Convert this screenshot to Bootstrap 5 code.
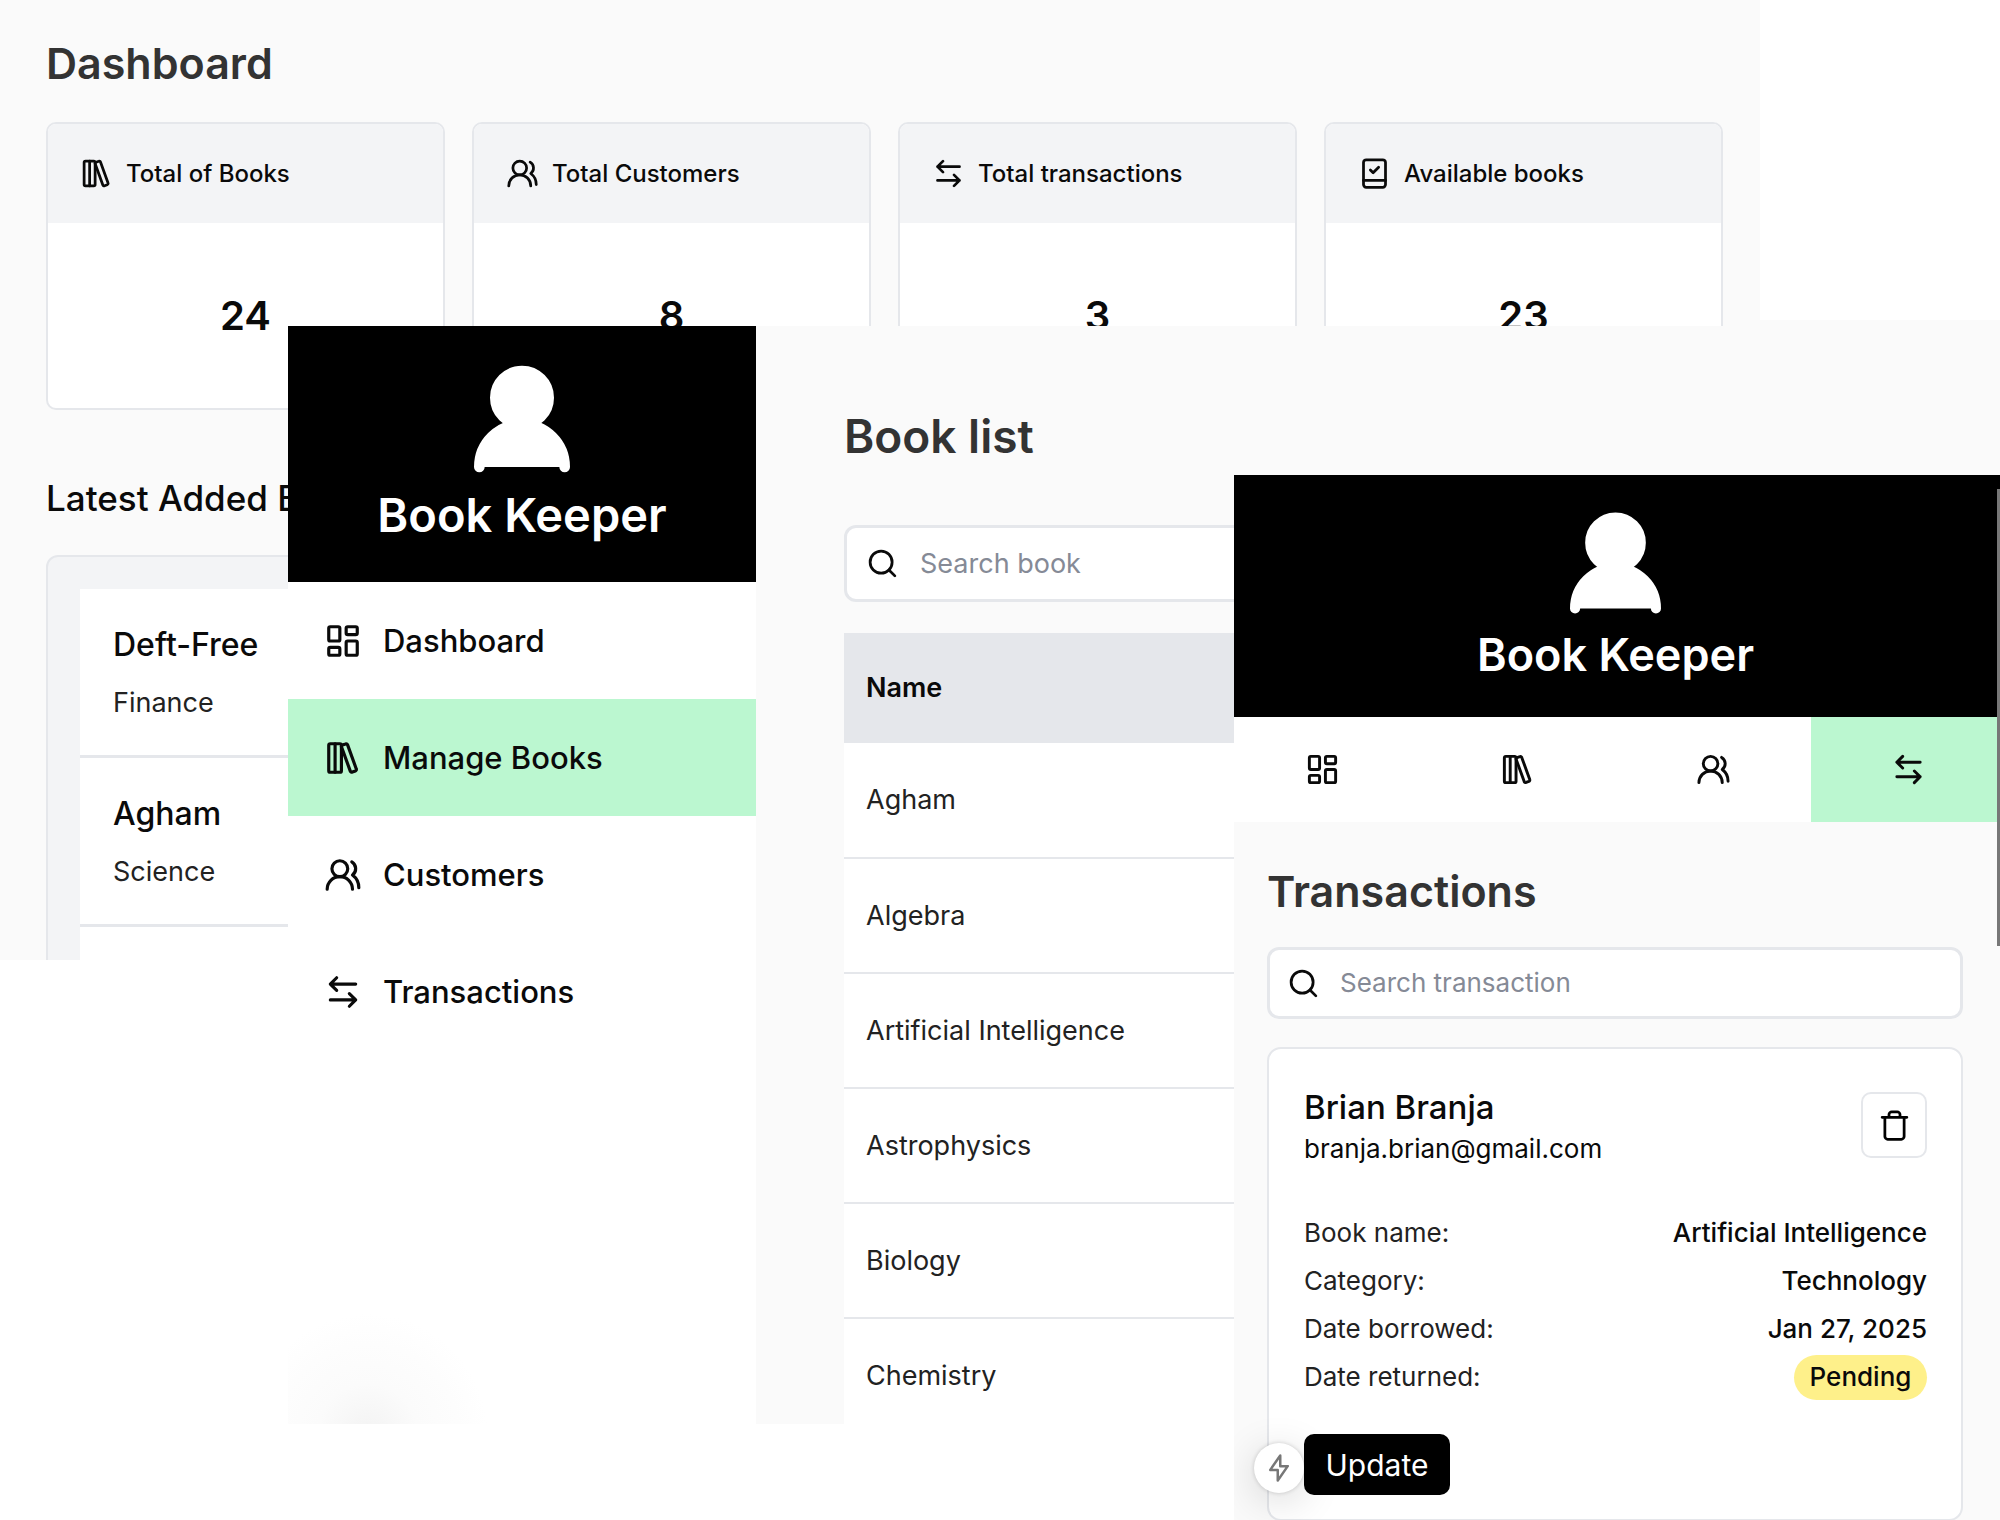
<!DOCTYPE html>
<html lang="en">
<head>
<meta charset="utf-8">
<meta name="viewport" content="width=device-width, initial-scale=1">
<title>Book Keeper</title>
<link href="https://cdn.jsdelivr.net/npm/bootstrap@5.3.0/dist/css/bootstrap.min.css" rel="stylesheet">
<style>
:root{--line:#e5e7eb;--soft:#f3f4f6;--page:#fafafa;--mint:#bbf7d0}
body{font-family:Inter,"Open Sans",sans-serif;color:#0a0a0a;background:#fff;font-size:26px;line-height:36px}
.ico{width:33px;height:33px;fill:none;stroke:currentColor;stroke-width:2;stroke-linecap:round;stroke-linejoin:round;flex:none}
.ico-lg{width:38px;height:38px}
.stage{min-height:100vh}
/* overlapping app windows */
.pane{position:absolute;overflow:hidden;background:var(--page)}
.pane-dash{left:0;top:0;width:88%;height:960px;padding:39px 37px 0 46px}
.pane-books{left:288px;top:326px;right:0;height:1098px}
.pane-edge{position:absolute;left:88%;right:0;top:320px;height:6px;background:var(--page)}
.pane-trans{left:1234px;top:475px;right:0;bottom:0}
.title{font-weight:600;color:#333;margin:0;font-size:43px;line-height:56px}
.title-dash{line-height:48px;margin-bottom:35px}
.title-books{font-size:46px}
.stats{gap:27px}
.stat{border:2px solid var(--line);border-radius:10px;overflow:hidden;flex:1 1 0}
.stat-head{height:99px;padding-left:32px;gap:13px;background:var(--soft);font-weight:500;font-size:24px}
.stat-num{height:185px;font-size:40px;font-weight:600}
.sub-title{font-size:35px;line-height:40px;font-weight:500;margin:68px 0 37px}
.latest{border:2px solid var(--line);border-radius:12px;background:var(--soft);padding:32px}
.latest-item{background:#fff;border-bottom:3px solid var(--line);padding:36px 33px 34px;font-size:27px}
.latest-item h3{font-size:32px;line-height:40px;font-weight:500;margin:0 0 20px}
.latest-item p{margin:0;color:#222}
.brand{background:#000;color:#fff;padding:39px 0}
.brand svg{width:96px;height:108px;fill:#fff;stroke:#fff;stroke-width:2;stroke-linecap:round}
.brand-name{font-size:47px;line-height:56px;font-weight:600;margin-top:14px}
.brand-sm{padding:37px 3px 35px 0}
.brand-sm svg{width:91px;height:102px}
.brand-sm .brand-name{font-size:45px;line-height:54px}
.side{width:468px;flex:none;background:#fff}
.side-link{height:117px;padding-left:36px;gap:21px;font-size:31px;font-weight:500;color:#0a0a0a;text-decoration:none}
.side-link.on,.tab.on{background:var(--mint)}
.side-glow{position:absolute;left:0;bottom:0;width:200px;height:140px;background:radial-gradient(circle at 80px 150px,#f3f3f3 0,#fbfbfb 50px,#fdfdfd 90px,#fff 120px)}
.books-main{padding:82px 0 0 88px}
.find{height:77px;background:#fff;border:3px solid var(--line);border-radius:12px;padding-left:19px;gap:21px}
.find .form-control{border:0;padding:0;background:none;box-shadow:none;font-size:27px;line-height:36px;border-radius:0}
.find .form-control::placeholder{color:#858a96;opacity:1}
.find-books{margin:61px 0 31px}
.book-table{--bs-table-bg:#fff;margin:0;color:#222;font-size:27px}
.book-table th,.book-table td{padding:0 22px;vertical-align:middle;border:0;height:115px;box-shadow:none}
.book-table td{border-bottom:2px solid var(--line)}
.book-table th{height:110px;background:var(--line);font-weight:600;color:#0a0a0a}
.tabs{margin:0 -6px 0 -9px}
.tab{height:105px;color:#0a0a0a}
.tab .ico{width:35px;height:35px}
.trans-main{padding:41px 37px 0 33px}
.find-trans{height:72px;margin:28px 0 28px;padding-left:17px;gap:20px}
.find-trans .form-control{font-size:26px}
.loan{border:2px solid var(--line);border-radius:14px;background:#fff;padding:38px 34px 24px 35px}
.loan h2{font-size:33px;line-height:40px;font-weight:500;margin:0 0 4px}
.trash{width:66px;height:66px;margin-top:5px;border:2px solid var(--line);border-radius:10px;background:#fff}
.loan dl{margin:42px 0 33px}
.loan-row{height:48px}
.loan dt{font-weight:400;color:#222}
.loan dd{margin:0;font-weight:500}
.loan .pill{background:#fef08a;color:#0a0a0a;border-radius:23px;height:45px;width:133px}
.btn-update{background:#000;color:#fff;border:0;border-radius:10px;width:146px;height:61px;font-size:30px;line-height:40px;padding:0}
.zap{position:absolute;left:20px;bottom:27px;width:50px;height:50px;border:0;border-radius:50%;background:#fff;color:#777;box-shadow:0 0 4px rgba(0,0,0,.18),0 8px 40px rgba(0,0,0,.16)}
.zap .ico{width:30px;height:30px}
.scroll-thumb{position:absolute;right:0;top:14px;width:3px;height:457px;background:#777}
</style>
<script src="https://cdn.jsdelivr.net/npm/bootstrap@5.3.0/dist/js/bootstrap.bundle.min.js"></script>
</head>
<body>
<svg class="d-none" aria-hidden="true">
  <symbol id="i-books" viewBox="0 0 24 24"><rect width="8" height="18" x="3" y="3" rx="1"/><path d="M7 3v18M20.4 18.9c.2.5-.1 1.1-.6 1.3l-1.9.7c-.5.2-1.1-.1-1.3-.6L11.1 5.1c-.2-.5.1-1.1.6-1.3l1.9-.7c.5-.2 1.1.1 1.3.6Z"/></symbol>
  <symbol id="i-users" viewBox="0 0 24 24"><path d="M18 21a8 8 0 0 0-16 0"/><circle cx="10" cy="8" r="5"/><path d="M22 20c0-3.37-2-6.5-4-8a5 5 0 0 0-.45-8.3"/></symbol>
  <symbol id="i-swap" viewBox="0 0 24 24"><path d="M8 3 4 7l4 4M4 7h16M16 21l4-4-4-4M20 17H4"/></symbol>
  <symbol id="i-check" viewBox="0 0 24 24"><rect x="4" y="2" width="16" height="20" rx="2"/><path d="M4 17h16M9 9.500l2 2 4-4"/></symbol>
  <symbol id="i-grid" viewBox="0 0 24 24"><rect width="7" height="9" x="3" y="3" rx="1"/><rect width="7" height="5" x="14" y="3" rx="1"/><rect width="7" height="9" x="14" y="12" rx="1"/><rect width="7" height="5" x="3" y="16" rx="1"/></symbol>
  <symbol id="i-search" viewBox="0 0 24 24"><circle cx="11" cy="11" r="8"/><path d="m21 21-4.300-4.300"/></symbol>
  <symbol id="i-trash" viewBox="0 0 24 24"><path d="M3 6h18M19 6v14c0 1-1 2-2 2H7c-1 0-2-1-2-2V6M8 6V4c0-1 1-2 2-2h4c1 0 2 1 2 2v2"/></symbol>
  <symbol id="i-zap" viewBox="0 0 24 24"><path d="M13 2 5 13.500h6L11 22l8-11.500h-6Z"/></symbol>
  <symbol id="i-person" viewBox="3 2 18 20"><circle cx="12" cy="8" r="5"/><path d="M20 21a8 8 0 0 0-16 0"/></symbol>
</svg>
<div class="stage position-relative overflow-hidden">

  <section class="pane pane-dash">
    <h1 class="title title-dash">Dashboard</h1>
    <div class="stats d-flex">
      <div class="stat bg-white"><div class="stat-head d-flex align-items-center"><svg class="ico"><use href="#i-books"/></svg>Total of Books</div><div class="stat-num d-flex align-items-center justify-content-center">24</div></div>
      <div class="stat bg-white"><div class="stat-head d-flex align-items-center"><svg class="ico"><use href="#i-users"/></svg>Total Customers</div><div class="stat-num d-flex align-items-center justify-content-center">8</div></div>
      <div class="stat bg-white"><div class="stat-head d-flex align-items-center"><svg class="ico"><use href="#i-swap"/></svg>Total transactions</div><div class="stat-num d-flex align-items-center justify-content-center">3</div></div>
      <div class="stat bg-white"><div class="stat-head d-flex align-items-center"><svg class="ico"><use href="#i-check"/></svg>Available books</div><div class="stat-num d-flex align-items-center justify-content-center">23</div></div>
    </div>
    <h2 class="sub-title">Latest Added Books</h2>
    <div class="latest">
      <div class="latest-item"><h3>Deft-Free</h3><p>Finance</p></div>
      <div class="latest-item"><h3>Agham</h3><p>Science</p></div>
      <div class="latest-item">&nbsp;</div>
    </div>
  </section>

  <div class="pane-edge"></div>
  <section class="pane pane-books d-flex">
    <aside class="side">
      <div class="brand d-flex flex-column align-items-center"><svg><use href="#i-person"/></svg><div class="brand-name">Book Keeper</div></div>
      <nav>
        <a class="side-link d-flex align-items-center" href="#"><svg class="ico ico-lg"><use href="#i-grid"/></svg>Dashboard</a>
        <a class="side-link on d-flex align-items-center" href="#"><svg class="ico ico-lg"><use href="#i-books"/></svg>Manage Books</a>
        <a class="side-link d-flex align-items-center" href="#"><svg class="ico ico-lg"><use href="#i-users"/></svg>Customers</a>
        <a class="side-link d-flex align-items-center" href="#"><svg class="ico ico-lg"><use href="#i-swap"/></svg>Transactions</a>
      </nav>
      <div class="side-glow"></div>
    </aside>
    <div class="books-main flex-grow-1">
      <h2 class="title title-books">Book list</h2>
      <label class="find find-books d-flex align-items-center"><svg class="ico"><use href="#i-search"/></svg><input class="form-control" type="search" placeholder="Search book" aria-label="Search book"></label>
      <table class="table book-table">
        <thead><tr><th scope="col">Name</th></tr></thead>
        <tbody>
          <tr><td>Agham</td></tr>
          <tr><td>Algebra</td></tr>
          <tr><td>Artificial Intelligence</td></tr>
          <tr><td>Astrophysics</td></tr>
          <tr><td>Biology</td></tr>
          <tr><td>Chemistry</td></tr>
        </tbody>
      </table>
    </div>
  </section>

  <section class="pane pane-trans">
    <div class="brand brand-sm d-flex flex-column align-items-center"><svg><use href="#i-person"/></svg><div class="brand-name">Book Keeper</div></div>
    <nav class="bg-white overflow-hidden">
      <div class="tabs d-flex">
        <a class="tab flex-fill d-flex align-items-center justify-content-center" href="#" aria-label="Dashboard"><svg class="ico"><use href="#i-grid"/></svg></a>
        <a class="tab flex-fill d-flex align-items-center justify-content-center" href="#" aria-label="Manage Books"><svg class="ico"><use href="#i-books"/></svg></a>
        <a class="tab flex-fill d-flex align-items-center justify-content-center" href="#" aria-label="Customers"><svg class="ico"><use href="#i-users"/></svg></a>
        <a class="tab on flex-fill d-flex align-items-center justify-content-center" href="#" aria-label="Transactions"><svg class="ico"><use href="#i-swap"/></svg></a>
      </div>
    </nav>
    <div class="trans-main">
      <h2 class="title">Transactions</h2>
      <label class="find find-trans d-flex align-items-center"><svg class="ico"><use href="#i-search"/></svg><input class="form-control" type="search" placeholder="Search transaction" aria-label="Search transaction"></label>
      <article class="loan">
        <div class="d-flex justify-content-between align-items-start">
          <div><h2>Brian Branja</h2><div>branja.brian@gmail.com</div></div>
          <button class="trash d-flex align-items-center justify-content-center p-0" type="button" aria-label="Delete"><svg class="ico"><use href="#i-trash"/></svg></button>
        </div>
        <dl>
          <div class="loan-row d-flex align-items-center justify-content-between"><dt>Book name:</dt><dd>Artificial Intelligence</dd></div>
          <div class="loan-row d-flex align-items-center justify-content-between"><dt>Category:</dt><dd>Technology</dd></div>
          <div class="loan-row d-flex align-items-center justify-content-between"><dt>Date borrowed:</dt><dd>Jan 27, 2025</dd></div>
          <div class="loan-row d-flex align-items-center justify-content-between"><dt>Date returned:</dt><dd class="pill d-flex align-items-center justify-content-center">Pending</dd></div>
        </dl>
        <button class="btn btn-update" type="button">Update</button>
      </article>
    </div>
    <button class="zap d-flex align-items-center justify-content-center p-0" type="button" aria-label="Quick actions"><svg class="ico"><use href="#i-zap"/></svg></button>
    <div class="scroll-thumb"></div>
  </section>
</div>
</body>
</html>
